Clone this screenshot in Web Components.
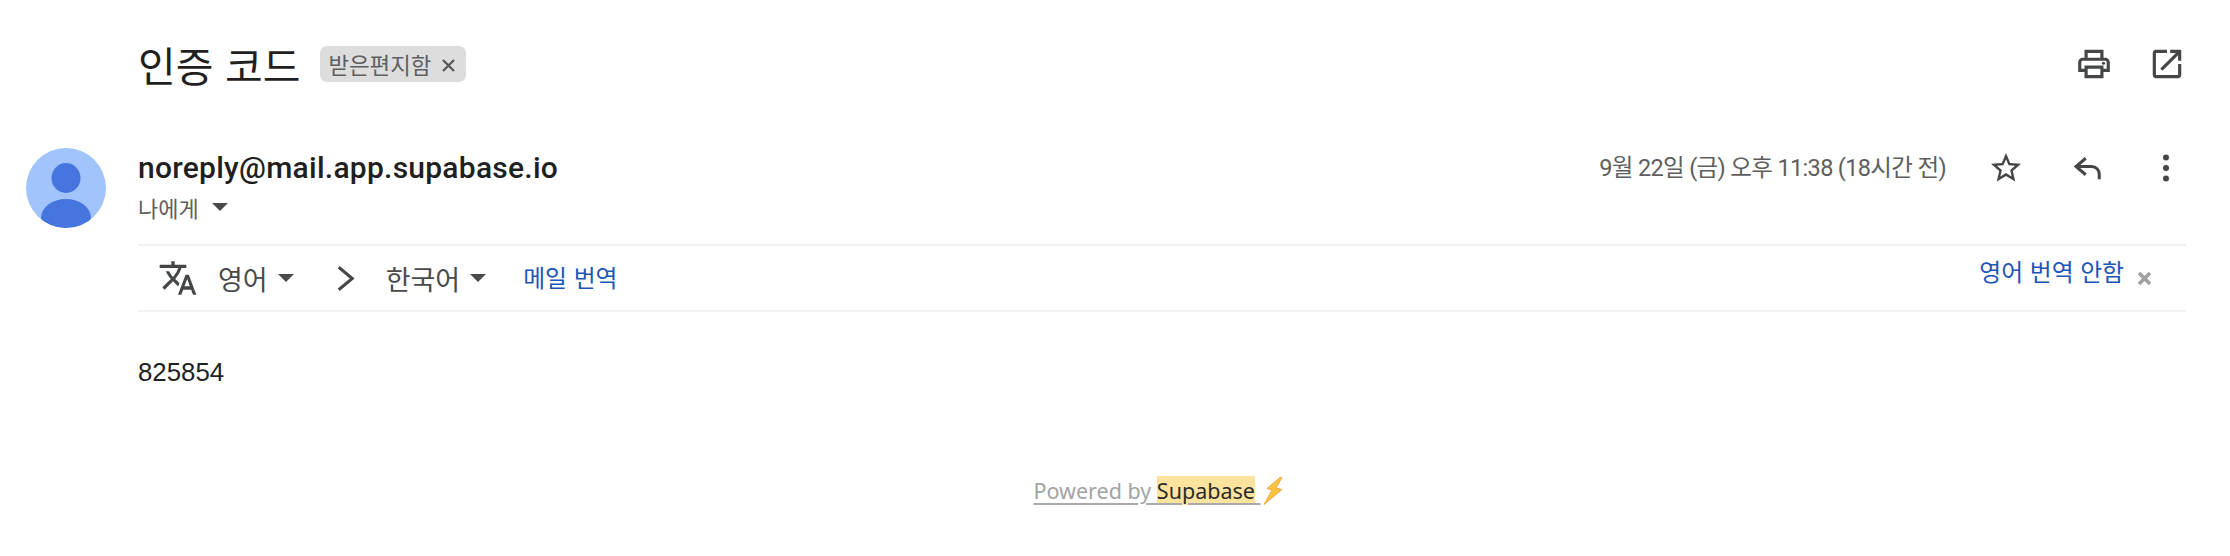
<!DOCTYPE html>
<html lang="ko"><head><meta charset="utf-8"><title>인증 코드</title>
<style>
html,body{margin:0;background:#fff}
body{font-family:Roboto,"Noto Sans CJK KR",sans-serif;color:#202124;width:2230px;height:556px;overflow:hidden}
</style></head><body>
<mail-view>
  <mail-subject subject="인증 코드" label="받은편지함"></mail-subject>
  <mail-message sender="noreply@mail.app.supabase.io" recipient="나에게" date="9월 22일 (금) 오후 11:38 (18시간 전)">
    <translate-bar></translate-bar>
    <mail-body code="825854"></mail-body>
    <powered-by></powered-by>
  </mail-message>
</mail-view>
<script>
const ICONS={
 print:'<path d="M19 8h-1V3H6v5H5c-1.66 0-3 1.34-3 3v6h4v4h12v-4h4v-6c0-1.66-1.34-3-3-3zM8 5h8v3H8V5zm8 12v2H8v-4h8v2zm2-2v-2H6v2H4v-4c0-.55.45-1 1-1h14c.55 0 1 .45 1 1v4h-2z"/><circle cx="18" cy="11.5" r="1"/>',
 open:'<path d="M19 19H5V5h7V3H5c-1.11 0-2 .9-2 2v14c0 1.1.89 2 2 2h14c1.1 0 2-.9 2-2v-7h-2v7zM14 3v2h3.59l-9.83 9.83 1.41 1.41L19 6.41V10h2V3h-7z"/>',
 star:'<path d="M22 9.24l-7.19-.62L12 2 9.19 8.63 2 9.24l5.46 4.73L5.82 21 12 17.27 18.18 21l-1.63-7.03L22 9.24zM12 15.4l-3.76 2.27 1-4.28-3.32-2.88 4.38-.38L12 6.1l1.71 4.04 4.38.38-3.32 2.88 1 4.28L12 15.4z"/>',
 reply:'<path d="M10.5 5.5 4 11l6.5 5.5M4 11h10.500a5 5 0 0 1 5 5v3.500" fill="none" stroke="currentColor" stroke-width="2"/>',
 more:'<circle cx="12" cy="5" r="2"/><circle cx="12" cy="12" r="2"/><circle cx="12" cy="19" r="2"/>',
 translate:'<path d="M12.87 15.07l-2.54-2.51.03-.03c1.74-1.94 2.98-4.17 3.71-6.53H17V4h-7V2H8v2H1v2h11.170C11.500 7.920 10.440 9.750 9 11.350 8.070 10.320 7.300 9.190 6.690 8h-2c.73 1.630 1.730 3.170 2.980 4.560l-5.090 5.020L4 19l5-5 3.110 3.110.76-2.040zM18.500 10h-2L12 22h2l1.120-3h4.750L21 22h2l-4.500-12zm-2.620 7l1.620-4.330L19.120 17h-3.240z"/>',
 chevron:'<path d="M6 2 18 12 6 22" fill="none" stroke="currentColor" stroke-width="2.700"/>'
};
class BaseEl extends HTMLElement{
  render(html){ if(!this.shadowRoot) this.attachShadow({mode:'open'}); this.shadowRoot.innerHTML=html; }
}
class MailIcon extends BaseEl{ connectedCallback(){
  const s=this.getAttribute('size')||38;
  this.render(`<style>:host{display:inline-flex;flex:none;color:#444746;width:${s}px;height:${s}px}svg{width:100%;height:100%;display:block;fill:currentColor}</style><svg viewBox="0 0 24 24" aria-hidden="true">${ICONS[this.getAttribute('name')]}</svg>`);
}}
customElements.define('mail-icon',MailIcon);
class DropCaret extends BaseEl{ connectedCallback(){
  this.render(`<style>:host{display:inline-block;flex:none;width:0;height:0;border-left:8px solid transparent;border-right:8px solid transparent;border-top:8px solid #4a4a4a}</style>`);
}}
customElements.define('drop-caret',DropCaret);
class MailView extends BaseEl{ connectedCallback(){
  this.render(`<style>:host{display:block;width:2230px}</style><slot></slot>`);
}}
customElements.define('mail-view',MailView);
class MailSubject extends BaseEl{ connectedCallback(){
  this.render(`<style>
  :host{display:flex;align-items:center;height:128px;padding:0 44px 0 138px;box-sizing:border-box;width:2230px}
  h1{margin:0;font:400 41px/1 "Noto Sans CJK KR",sans-serif;color:#1f1f1f}
  .chip{display:flex;align-items:center;height:36px;margin-left:20px;padding:0 11px 0 8px;background:#dddddd;border-radius:7px;color:#5f5f5f;font:400 22.400px/1 "Noto Sans CJK KR",sans-serif}
  .x{margin-left:11px;display:block;width:13px;height:13px;margin-top:3px}
  .acts{margin-left:auto;display:flex;align-items:center;gap:35px}
  </style>
  <h1>${this.getAttribute('subject')}</h1>
  <span class="chip">${this.getAttribute('label')}<svg class="x" viewBox="0 0 13 13"><path d="M1 1l11 11M12 1 1 12" stroke="#555" stroke-width="2.200"/></svg></span>
  <span class="acts"><mail-icon name="print" size="38"></mail-icon><mail-icon name="open" size="38"></mail-icon></span>`);
}}
customElements.define('mail-subject',MailSubject);
class MailMessage extends BaseEl{ connectedCallback(){
  this.render(`<style>
  :host{display:flex;gap:32px;padding:20px 44px 0 26px;box-sizing:border-box;width:2230px}
  .av{flex:none;width:80px;height:80px;display:block}
  .main{flex:1;min-width:0}
  .head{display:flex;justify-content:space-between;height:96px;align-items:flex-start}
  .name{font:500 30px/40px Roboto,sans-serif;color:#1f1f1f;letter-spacing:.25px}
  .to{display:flex;align-items:center;gap:13px;font:400 22px/28px "Noto Sans CJK KR",sans-serif;color:#5e5e5e;margin-top:5px}
  .right{display:flex;align-items:center;height:40px}
  .date{font:400 23.500px/40px Roboto,"Noto Sans CJK KR",sans-serif;letter-spacing:-.65px;color:#5e5e5e;margin-right:42px}
  </style>
  <svg class="av" viewBox="0 0 80 80"><defs><clipPath id="c"><circle cx="40" cy="40" r="40"/></clipPath></defs><circle cx="40" cy="40" r="40" fill="#a1c4fc"/><g clip-path="url(#c)" fill="#4675e0"><ellipse cx="40" cy="30" rx="14.500" ry="15"/><ellipse cx="40" cy="70" rx="25" ry="19"/></g></svg>
  <div class="main">
    <div class="head">
      <div><div class="name">${this.getAttribute('sender')}</div>
        <div class="to">${this.getAttribute('recipient')}<drop-caret></drop-caret></div></div>
      <div class="right"><span class="date">${this.getAttribute('date')}</span>
        <mail-icon name="star" size="36"></mail-icon>
        <span style="width:46px"></span><mail-icon name="reply" size="36"></mail-icon>
        <span style="width:42px"></span><mail-icon name="more" size="36"></mail-icon><span style="width:2px"></span></div>
    </div>
    <slot></slot>
  </div>`);
}}
customElements.define('mail-message',MailMessage);
class TranslateBar extends BaseEl{ connectedCallback(){
  this.render(`<style>
  :host{display:flex;align-items:center;height:68px;box-sizing:border-box;border-top:2px solid #f1f1f1;border-bottom:2px solid #f1f1f1;padding:0 34px 0 20px;font:400 27px/1 "Noto Sans CJK KR",sans-serif;color:#4a4a4a}
  .lang{display:flex;align-items:center;gap:10px}
  a{color:#1a56b8;font-size:23.800px;text-decoration:none;margin-bottom:2px}
  .sp{margin-left:auto;margin-bottom:14px}
  .x{width:15px;height:15px;margin-left:13px;display:block}
  </style>
  <mail-icon name="translate" size="40"></mail-icon>
  <span class="lang" style="margin-left:20px">영어<drop-caret></drop-caret></span>
  <mail-icon name="chevron" size="27" style="margin-left:38px"></mail-icon>
  <span class="lang" style="margin-left:27px">한국어<drop-caret></drop-caret></span>
  <a style="margin-left:37px">메일 번역</a>
  <a class="sp">영어 번역 안함</a>
  <svg class="x" viewBox="0 0 15 15"><path d="M2 2l11 11M13 2 2 13" stroke="#a0a0a0" stroke-width="3.600"/></svg>`);
}}
customElements.define('translate-bar',TranslateBar);
class MailBody extends BaseEl{ connectedCallback(){
  this.render(`<style>:host{display:block;padding-top:45px;font:400 25.800px/30px "Liberation Sans",Arial,sans-serif;color:#222}</style>${this.getAttribute('code')}`);
}}
customElements.define('mail-body',MailBody);
class PoweredBy extends BaseEl{ connectedCallback(){
  this.render(`<style>
  :host{display:flex;justify-content:center;align-items:center;margin-top:89px;margin-left:-6px;font:400 21.500px/30px "Noto Sans",sans-serif;color:#a3a3a3}
  a{color:inherit;text-decoration:underline;text-underline-offset:4px;text-decoration-thickness:2px;text-decoration-color:#a9a9a9;white-space:pre}
  mark{background:#fde49e;color:#2b2b2b}
  svg{width:24px;height:30px;flex:none}
  </style>
  <a>Powered by <mark>Supabase</mark> </a><svg viewBox="0 0 24 30"><path d="M19 1.500 6 12.500l5 1.500L3 28.500 21 13.500l-6-1.500 6-10.500z" fill="#f9c33f" stroke="#f3a74e" stroke-width="1"/></svg>`);
}}
customElements.define('powered-by',PoweredBy);
</script>
</body></html>
